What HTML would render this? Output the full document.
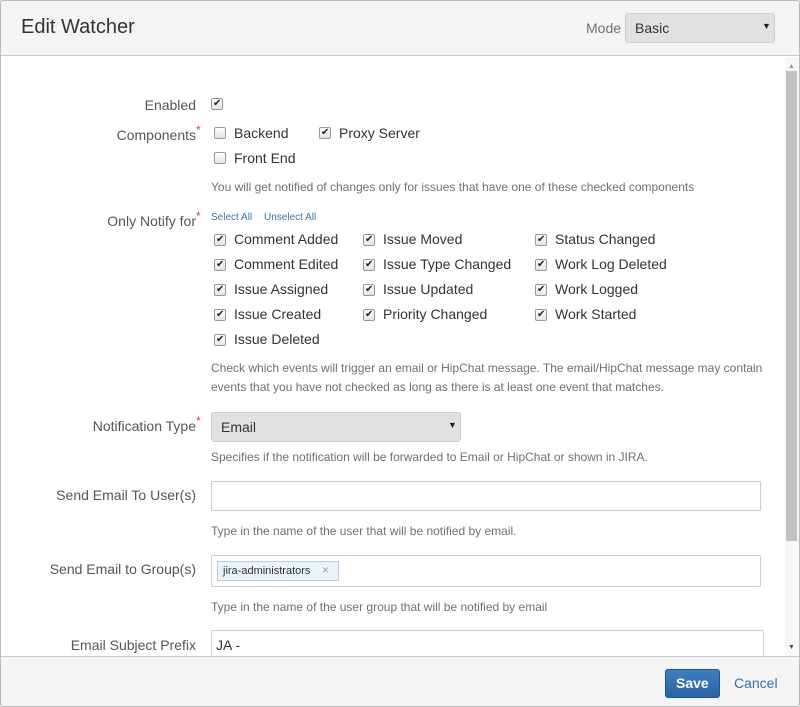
<!DOCTYPE html>
<html><head><meta charset="utf-8"><style>
*{box-sizing:border-box;margin:0;padding:0}
body{width:800px;height:707px;overflow:hidden;background:#fff;font-family:"Liberation Sans",Arial,sans-serif;color:#333;position:relative}
.frame{position:absolute;left:0;top:0;width:800px;height:707px;overflow:hidden;background:#fff}
.bord{position:absolute;left:0;top:0;width:800px;height:707px;border:1px solid #bbb;border-radius:3px;pointer-events:none}
.hdr{position:absolute;left:0;top:0;width:800px;height:56px;background:#f3f4f3;border-bottom:1px solid #ccc}
.ftr{position:absolute;left:0;top:656px;width:800px;height:51px;background:#f3f4f3;border-top:1px solid #ccc}
.a{position:absolute;white-space:nowrap;line-height:1}
.lbl{position:absolute;right:604px;font-size:14px;color:#555;white-space:nowrap;line-height:1}
.req{color:#d04437;font-size:12px;position:absolute;left:100%;top:-4px;margin-left:0}
.cb{position:absolute;width:12px;height:12px;border:1px solid #999;border-radius:2px;background:linear-gradient(#fdfdfd,#e4e4e4)}
.cb.on::after{content:"✔";position:absolute;left:1px;top:-1px;font-size:10px;color:#222;line-height:12px}
.t{position:absolute;font-size:14px;color:#333;white-space:nowrap;line-height:1}
.help{position:absolute;left:211px;font-size:12px;color:#707070;white-space:nowrap;line-height:1}
.inp{position:absolute;background:#fff;border:1px solid #ccc;border-radius:2px}
</style></head><body><div class="frame">
<div class="hdr"></div>
<div class="a" style="left:21px;top:17px;font-size:20px;color:#333">Edit Watcher</div>
<div class="a" style="left:586px;top:21px;font-size:14px;color:#707070">Mode</div>
<div style="position:absolute;left:625px;top:13px;width:150px;height:30px;background:#e0e1e0;border:1px solid #ccc;border-radius:3px"></div>
<div class="a" style="left:635px;top:21px;font-size:14px;color:#333">Basic</div>
<div class="a" style="left:762px;top:22px;font-size:9px;color:#222">▼</div>

<div style="position:absolute;left:785px;top:57px;width:14px;height:599px;background:#f7f7f7"></div>
<div class="a" style="left:788px;top:63px;font-size:7px;color:#999">▲</div>
<div style="position:absolute;left:786px;top:71px;width:11px;height:470px;background:#c1c1c1"></div>
<div class="a" style="left:788px;top:644px;font-size:7px;color:#555">▼</div>

<div class="lbl" style="top:98px">Enabled</div>
<div class="cb on" style="left:211px;top:98px"></div>

<div class="lbl" style="top:128px">Components<span class="req">*</span></div>
<div class="cb" style="left:214px;top:127px"></div><div class="t" style="left:234px;top:126px">Backend</div>
<div class="cb on" style="left:319px;top:127px"></div><div class="t" style="left:339px;top:126px">Proxy Server</div>
<div class="cb" style="left:214px;top:152px"></div><div class="t" style="left:234px;top:151px">Front End</div>
<div class="help" style="top:181px">You will get notified of changes only for issues that have one of these checked components</div>

<div class="lbl" style="top:214px">Only Notify for<span class="req">*</span></div>
<div class="a" style="left:211px;top:213px;font-size:10px;color:#3572b0">Select All</div>
<div class="a" style="left:264px;top:213px;font-size:10px;color:#3572b0">Unselect All</div>

<div class="cb on" style="left:214px;top:234px"></div><div class="t" style="left:234px;top:232px">Comment Added</div>
<div class="cb on" style="left:214px;top:259px"></div><div class="t" style="left:234px;top:257px">Comment Edited</div>
<div class="cb on" style="left:214px;top:284px"></div><div class="t" style="left:234px;top:282px">Issue Assigned</div>
<div class="cb on" style="left:214px;top:309px"></div><div class="t" style="left:234px;top:307px">Issue Created</div>
<div class="cb on" style="left:214px;top:334px"></div><div class="t" style="left:234px;top:332px">Issue Deleted</div>
<div class="cb on" style="left:363px;top:234px"></div><div class="t" style="left:383px;top:232px">Issue Moved</div>
<div class="cb on" style="left:363px;top:259px"></div><div class="t" style="left:383px;top:257px">Issue Type Changed</div>
<div class="cb on" style="left:363px;top:284px"></div><div class="t" style="left:383px;top:282px">Issue Updated</div>
<div class="cb on" style="left:363px;top:309px"></div><div class="t" style="left:383px;top:307px">Priority Changed</div>
<div class="cb on" style="left:535px;top:234px"></div><div class="t" style="left:555px;top:232px">Status Changed</div>
<div class="cb on" style="left:535px;top:259px"></div><div class="t" style="left:555px;top:257px">Work Log Deleted</div>
<div class="cb on" style="left:535px;top:284px"></div><div class="t" style="left:555px;top:282px">Work Logged</div>
<div class="cb on" style="left:535px;top:309px"></div><div class="t" style="left:555px;top:307px">Work Started</div>
<div class="help" style="top:362px">Check which events will trigger an email or HipChat message. The email/HipChat message may contain</div>
<div class="help" style="top:381px">events that you have not checked as long as there is at least one event that matches.</div>

<div class="lbl" style="top:419px">Notification Type<span class="req">*</span></div>
<div style="position:absolute;left:211px;top:412px;width:250px;height:30px;background:#e0e1e0;border:1px solid #ccc;border-radius:3px"></div>
<div class="a" style="left:221px;top:420px;font-size:14px;color:#333">Email</div>
<div class="a" style="left:448px;top:421px;font-size:9px;color:#222">▼</div>
<div class="help" style="top:451px">Specifies if the notification will be forwarded to Email or HipChat or shown in JIRA.</div>

<div class="lbl" style="top:488px">Send Email To User(s)</div>
<div class="inp" style="left:211px;top:481px;width:550px;height:30px"></div>
<div class="help" style="top:525px">Type in the name of the user that will be notified by email.</div>

<div class="lbl" style="top:562px">Send Email to Group(s)</div>
<div class="inp" style="left:211px;top:555px;width:550px;height:32px"></div>
<div style="position:absolute;left:217px;top:561px;width:122px;height:20px;background:#ebf2f9;border:1px solid #bcd"></div>
<div class="a" style="left:223px;top:566px;font-size:11px;color:#333">jira-administrators</div>
<div class="a" style="left:322px;top:564px;font-size:12px;color:#8aa">×</div>
<div class="help" style="top:601px">Type in the name of the user group that will be notified by email</div>

<div class="lbl" style="top:638px">Email Subject Prefix</div>
<div class="inp" style="left:211px;top:630px;width:553px;height:40px"></div>
<div class="a" style="left:216px;top:638px;font-size:14px;color:#333">JA -</div>

<div class="ftr"></div>
<div style="position:absolute;left:665px;top:669px;width:55px;height:29px;background:linear-gradient(#3d7fc0,#2a64a3);border:1px solid #1f5590;border-radius:3px"></div>
<div class="a" style="left:676px;top:676px;font-size:14px;font-weight:bold;color:#fff">Save</div>
<div class="a" style="left:734px;top:676px;font-size:14px;color:#3572b0">Cancel</div>
<div class="bord"></div>
</div></body></html>
